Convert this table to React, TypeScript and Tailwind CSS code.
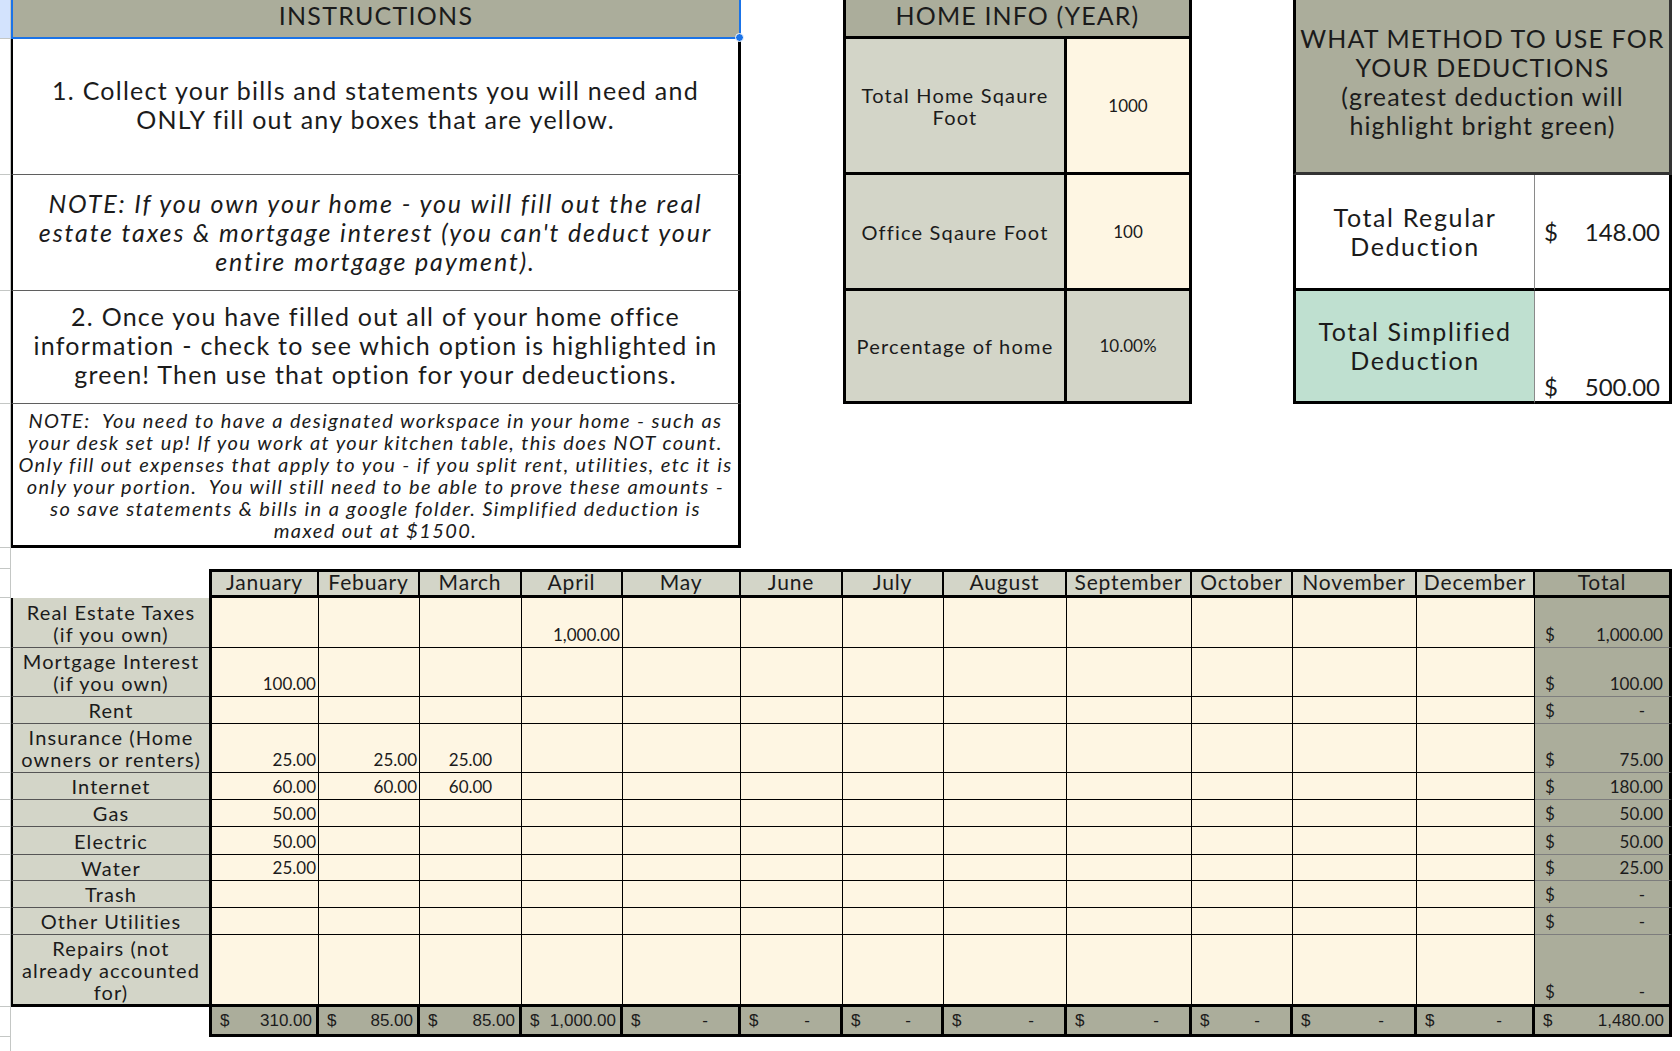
import React from "react";

const months = [
  "January",
  "Febuary",
  "March",
  "April",
  "May",
  "June",
  "July",
  "August",
  "September",
  "October",
  "November",
  "December",
];

type Row = { label: string[]; vals: Record<number, string>; total: string };

const rows: Row[] = [
  { label: ["Real Estate Taxes", "(if you own)"], vals: { 3: "1,000.00" }, total: "1,000.00" },
  { label: ["Mortgage Interest", "(if you own)"], vals: { 0: "100.00" }, total: "100.00" },
  { label: ["Rent"], vals: {}, total: "-" },
  { label: ["Insurance (Home", "owners or renters)"], vals: { 0: "25.00", 1: "25.00", 2: "25.00" }, total: "75.00" },
  { label: ["Internet"], vals: { 0: "60.00", 1: "60.00", 2: "60.00" }, total: "180.00" },
  { label: ["Gas"], vals: { 0: "50.00" }, total: "50.00" },
  { label: ["Electric"], vals: { 0: "50.00" }, total: "50.00" },
  { label: ["Water"], vals: { 0: "25.00" }, total: "25.00" },
  { label: ["Trash"], vals: {}, total: "-" },
  { label: ["Other Utilities"], vals: {}, total: "-" },
  { label: ["Repairs (not", "already accounted", "for)"], vals: {}, total: "-" },
];

const monthTotals = ["310.00", "85.00", "85.00", "1,000.00", "-", "-", "-", "-", "-", "-", "-", "-"];

// row header strip heights, top to bottom
const gutter = [
  "h-[39px] bg-[#d3e3fd]",
  "h-[136px]",
  "h-[116px]",
  "h-[113px]",
  "h-[144px]",
  "h-[21px]",
  "h-[29px]",
  "h-[50px]",
  "h-[49px]",
  "h-[27px]",
  "h-[49px]",
  "h-[27px]",
  "h-[27px]",
  "h-[28px]",
  "h-[26px]",
  "h-[27px]",
  "h-[27px]",
  "h-[72px]",
  "h-[30px]",
  "h-[30px]",
];

const COLS =
  "grid grid-cols-[198px_110px_101px_102px_101px_118px_102px_101px_123px_125px_101px_124px_118px_137px]";

function Lines({ lines, className = "" }: { lines: string[]; className?: string }) {
  return (
    <div className={`text-center ${className}`}>
      {lines.map((l) => (
        <div key={l} className="whitespace-pre">
          {l}
        </div>
      ))}
    </div>
  );
}

function TopSection() {
  return (
    <div className={`${COLS} grid-rows-[39px_136px_116px_113px_144px]`}>
      {/* instructions */}
      <div className="relative col-start-1 col-span-6 row-start-1 flex items-center justify-center border-x-2 border-b-2 border-[#1a73e8] bg-[#abad9b] pb-[5px] text-[25px] tracking-[0.05em]">
        INSTRUCTIONS
        <span className="absolute -bottom-[5px] -right-[5px] h-[9px] w-[9px] rounded-full border border-white bg-[#1a73e8]" />
      </div>
      <div className="col-start-1 col-span-6 row-start-2 flex items-center justify-center border-l-2 border-r-[3px] border-b border-l-black border-r-black border-b-[#5f5f5f] pb-[3px] text-[25px] leading-[29px] tracking-[0.05em]">
        <Lines lines={["1. Collect your bills and statements you will need and", "ONLY fill out any boxes that are yellow."]} />
      </div>
      <div className="col-start-1 col-span-6 row-start-3 flex items-center justify-center border-l-2 border-r-[3px] border-b border-l-black border-r-black border-b-[#5f5f5f] text-[25px] italic leading-[29px] tracking-[0.075em]">
        <Lines
          lines={[
            "NOTE: If you own your home - you will fill out the real",
            "estate taxes & mortgage interest (you can't deduct your",
            "entire mortgage payment).",
          ]}
        />
      </div>
      <div className="col-start-1 col-span-6 row-start-4 flex items-center justify-center border-l-2 border-r-[3px] border-b border-l-black border-r-black border-b-[#5f5f5f] pb-[3px] text-[25px] leading-[29px] tracking-[0.05em]">
        <Lines
          lines={[
            "2. Once you have filled out all of your home office",
            "information - check to see which option is highlighted in",
            "green! Then use that option for your dedeuctions.",
          ]}
        />
      </div>
      <div className="col-start-1 col-span-6 row-start-5 flex items-center justify-center border-l-2 border-r-[3px] border-b-[3px] border-black text-[20px] italic leading-[22px] tracking-[0.07em]">
        <Lines
          lines={[
            "NOTE:  You need to have a designated workspace in your home - such as",
            "your desk set up! If you work at your kitchen table, this does NOT count.",
            "Only fill out expenses that apply to you - if you split rent, utilities, etc it is",
            "only your portion.  You will still need to be able to prove these amounts -",
            "so save statements & bills in a google folder. Simplified deduction is",
            "maxed out at $1500.",
          ]}
        />
      </div>

      {/* home info */}
      <div className="col-start-8 col-span-3 row-start-1 flex items-center justify-center border-x-[3px] border-b-[3px] border-black bg-[#abad9b] pb-[5px] text-[25px] tracking-[0.045em]">
        HOME INFO (YEAR)
      </div>
      <div className="col-start-8 col-span-2 row-start-2 flex items-center justify-center border-l-[3px] border-r-[3px] border-b-[3px] border-black bg-[#d3d5c8] text-[20px] leading-[22px] tracking-[0.06em]">
        <Lines lines={["Total Home Sqaure", "Foot"]} />
      </div>
      <div className="col-start-10 row-start-2 flex items-center justify-center border-r-[3px] border-b-[3px] border-black bg-[#fef6e3] text-[17px]">
        1000
      </div>
      <div className="col-start-8 col-span-2 row-start-3 flex items-center justify-center border-l-[3px] border-r-[3px] border-b-[3px] border-black bg-[#d3d5c8] text-[20px] tracking-[0.06em]">
        Office Sqaure Foot
      </div>
      <div className="col-start-10 row-start-3 flex items-center justify-center border-r-[3px] border-b-[3px] border-black bg-[#fef6e3] text-[17px]">
        100
      </div>
      <div className="col-start-8 col-span-2 row-start-4 flex items-center justify-center border-l-[3px] border-r-[3px] border-b-[3px] border-black bg-[#d3d5c8] text-[20px] tracking-[0.06em]">
        Percentage of home
      </div>
      <div className="col-start-10 row-start-4 flex items-center justify-center border-r-[3px] border-b-[3px] border-black bg-[#d3d5c8] text-[17px]">
        10.00%
      </div>

      {/* deduction method */}
      <div className="col-start-12 col-span-3 row-start-1 row-span-2 flex items-center justify-center border-l-[3px] border-r-[3px] border-b-[3px] border-l-black border-r-[#333] border-b-[#333] bg-[#abad9b] pb-2 text-[25px] leading-[29px] tracking-[0.045em]">
        <Lines lines={["WHAT METHOD TO USE FOR", "YOUR DEDUCTIONS", "(greatest deduction will", "highlight bright green)"]} />
      </div>
      <div className="col-start-12 col-span-2 row-start-3 flex items-center justify-center border-l-[3px] border-r border-b-[3px] border-l-black border-r-[#8a8a8a] border-b-black bg-white text-[25px] leading-[29px] tracking-[0.065em]">
        <Lines lines={["Total Regular", "Deduction"]} />
      </div>
      <div className="col-start-14 row-start-3 flex items-center justify-between border-r-[3px] border-b-[3px] border-black bg-white pl-[9px] pr-[9px] text-[24px]">
        <span>$</span>
        <span>148.00</span>
      </div>
      <div className="col-start-12 col-span-2 row-start-4 flex items-center justify-center border-l-[3px] border-r border-b-[3px] border-l-black border-r-[#8a8a8a] border-b-black bg-[#bfe0d0] text-[25px] leading-[29px] tracking-[0.065em]">
        <Lines lines={["Total Simplified", "Deduction"]} />
      </div>
      <div className="col-start-14 row-start-4 flex items-end justify-between border-r-[3px] border-b-[3px] border-black bg-white pl-[9px] pr-[9px] text-[24px] leading-[29px]">
        <span>$</span>
        <span>500.00</span>
      </div>
    </div>
  );
}

function ExpenseTable() {
  return (
    <div className={`${COLS} grid-rows-[29px_50px_49px_27px_49px_27px_27px_28px_26px_27px_27px_72px_30px]`}>
      {/* month headings */}
      <div />
      {months.map((m, i) => (
        <div
          key={m}
          className={`${i === 0 ? "border-l-[3px]" : ""} flex items-center justify-center border-y-[3px] border-r-2 border-black bg-[#d3d5c8] pb-[3px] text-[21px] tracking-[0.04em]`}
        >
          {m}
        </div>
      ))}
      <div className="flex items-center justify-center border-y-[3px] border-r-[3px] border-black bg-[#abad9b] pb-[3px] text-[21px] tracking-[0.04em]">
        Total
      </div>

      {rows.map((r, ri) => {
        const last = ri === rows.length - 1;
        return (
          <React.Fragment key={r.label[0]}>
            <div
              className={`${last ? "border-b-[3px] border-b-black" : "border-b border-b-[#555]"} flex items-center justify-center border-l-2 border-l-black bg-[#d3d5c8] text-[20px] leading-[22px] tracking-[0.055em]`}
            >
              <Lines lines={r.label} />
            </div>
            {months.map((m, i) => (
              <div
                key={m}
                className={`${i === 0 ? "border-l-[3px]" : ""} ${last ? "border-b-[3px]" : "border-b"} ${i === 2 ? "justify-center" : "justify-end pr-[2px]"} flex items-end border-r border-black bg-[#fef6e3] pb-[2px] text-[17px] leading-[20px]`}
              >
                {r.vals[i] ?? ""}
              </div>
            ))}
            <div
              className={`${last ? "border-b-[3px] border-b-black" : "border-b border-b-[#7d7d7d]"} flex items-end justify-between border-r-[3px] border-r-black bg-[#abad9b] pb-[2px] pl-[10px] text-[17px] leading-[20px] ${r.total === "-" ? "pr-[24px]" : "pr-[6px]"}`}
            >
              <span>$</span>
              <span>{r.total}</span>
            </div>
          </React.Fragment>
        );
      })}

      {/* monthly totals */}
      <div />
      {monthTotals.map((t, i) => (
        <div
          key={i}
          className={`${i === 0 ? "border-l-[3px]" : ""} ${t === "-" ? "pr-[30px]" : "pr-[4px]"} flex items-center justify-between border-r-[3px] border-b-[3px] border-black bg-[#abad9b] pl-[8px] font-['Liberation_Sans',Arial,sans-serif] text-[17px]`}
        >
          <span>$</span>
          <span>{t}</span>
        </div>
      ))}
      <div className="flex items-center justify-between border-r-[3px] border-b-[3px] border-black bg-[#abad9b] pl-[8px] pr-[5px] font-['Liberation_Sans',Arial,sans-serif] text-[17px]">
        <span>$</span>
        <span>1,480.00</span>
      </div>
    </div>
  );
}

export default function App() {
  return (
    <div className="flex h-[1051px] w-[1680px] overflow-hidden bg-white font-['Lato',sans-serif] text-[#1b1b1b]">
      <div className="flex w-[11px] shrink-0 flex-col border-r border-[#c4c7c5]">
        {gutter.map((g, i) => (
          <div key={i} className={`${g} shrink-0 border-b border-[#c4c7c5]`} />
        ))}
      </div>
      <div className="flex flex-col">
        <TopSection />
        <div className="h-[21px]" />
        <ExpenseTable />
      </div>
    </div>
  );
}
